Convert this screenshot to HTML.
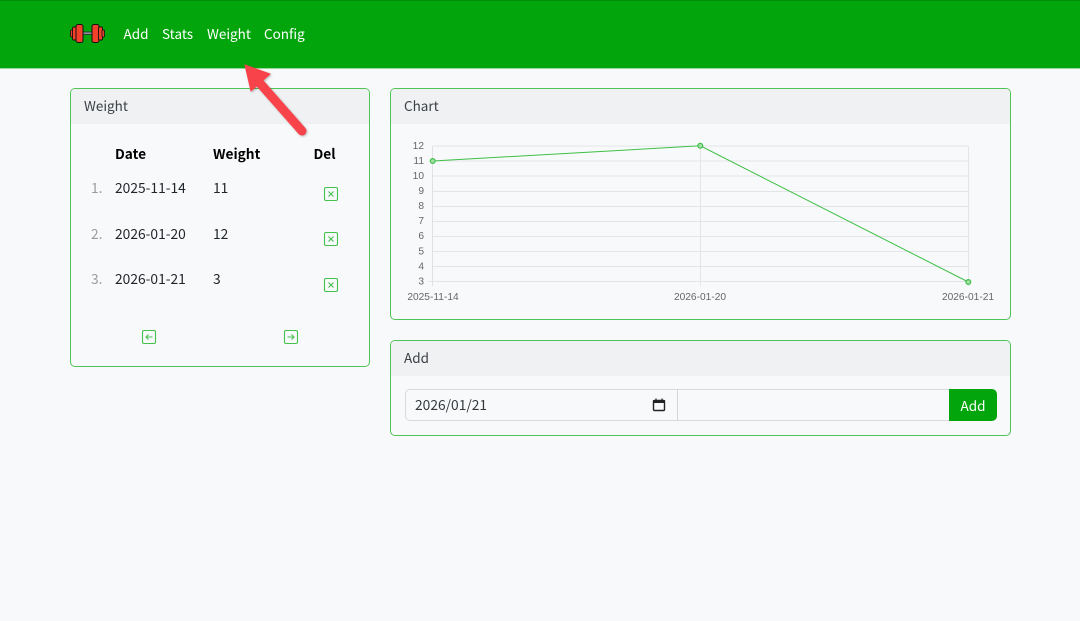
<!DOCTYPE html>
<html><head><meta charset="utf-8"><style>
*{box-sizing:border-box}
html,body{margin:0;padding:0;width:1080px;height:621px;overflow:hidden;background:#f8f9fa;font-family:"Noto Sans CJK JP","Liberation Sans",sans-serif;font-size:13.500px;color:#212529}
.a{position:absolute;white-space:nowrap;line-height:20px}
.nav{position:absolute;left:0;top:0;width:1080px;height:69px;background:#03a50c;border-top:1px solid #029009;border-bottom:1px solid #9ad79d}
.card{position:absolute;border:1px solid #4fc456;border-radius:5px;background:#f8f9fa;overflow:hidden}
.hd{height:35px;background:#f0f1f3;}
.n{color:#fff}
.b{font-weight:700;color:#000;font-size:13.700px}
.g{color:#9a9c9e;font-size:13.800px}
.d{font-size:13.800px}
</style></head><body>
<div class="nav"></div>
<svg class="a" style="left:70px;top:23px" width="35" height="22" viewBox="0 0 35 22">
<rect x="6" y="9" width="23" height="2.500" fill="#8a8f9c" stroke="#222" stroke-width=".7"/>
<rect x=".5" y="7" width="2.500" height="7" rx="1" fill="#e8402c" stroke="#111" stroke-width=".8"/>
<rect x="2.500" y="4" width="4" height="13" rx="1" fill="#f2412b" stroke="#111" stroke-width=".9"/>
<rect x="6" y="1.500" width="7" height="18" rx="2" fill="#f2412b" stroke="#111" stroke-width="1"/>
<rect x="22" y="1.500" width="7" height="18" rx="2" fill="#f2412b" stroke="#111" stroke-width="1"/>
<rect x="28.500" y="4" width="4" height="13" rx="1" fill="#f2412b" stroke="#111" stroke-width=".9"/>
<rect x="32" y="7" width="2.500" height="7" rx="1" fill="#e8402c" stroke="#111" stroke-width=".8"/>
</svg>
<div class="a n" style="left:123.500px;top:23px">Add</div>
<div class="a n" style="left:162px;top:23px">Stats</div>
<div class="a n" style="left:207px;top:23px">Weight</div>
<div class="a n" style="left:264px;top:23px">Config</div>

<div class="card" style="left:70px;top:88px;width:300px;height:279px"><div class="hd"></div></div>
<div class="card" style="left:390px;top:88px;width:621px;height:232px"><div class="hd"></div></div>
<div class="card" style="left:390px;top:340px;width:621px;height:96px"><div class="hd"></div></div>

<div class="a" style="left:84px;top:95px;color:#3b4046">Weight</div>
<div class="a" style="left:404px;top:95px;color:#3b4046">Chart</div>
<div class="a" style="left:404px;top:347px;color:#3b4046">Add</div>

<div class="a b" style="left:115px;top:143px">Date</div>
<div class="a b" style="left:213px;top:143px">Weight</div>
<div class="a b" style="left:313.500px;top:143px">Del</div>

<div class="a g" style="left:91px;top:177px">1.</div><div class="a d" style="left:115px;top:177px">2025-11-14</div><div class="a d" style="left:213px;top:177px">11</div>
<div class="a g" style="left:91px;top:223px">2.</div><div class="a d" style="left:115px;top:223px">2026-01-20</div><div class="a d" style="left:213px;top:223px">12</div>
<div class="a g" style="left:91px;top:268px">3.</div><div class="a d" style="left:115px;top:268px">2026-01-21</div><div class="a d" style="left:213px;top:268px">3</div>

<svg class="a" style="left:0;top:0" width="1080" height="621" viewBox="0 0 1080 621" fill="none">
<g stroke="#45c14d" stroke-width="1.100">
<rect x="324.500" y="187.500" width="13" height="13" rx="1.500"/>
<rect x="324.500" y="232.500" width="13" height="13" rx="1.500"/>
<rect x="324.500" y="278.500" width="13" height="13" rx="1.500"/>
<rect x="142.500" y="330.500" width="13" height="13" rx="1.500"/>
<rect x="284.500" y="330.500" width="13" height="13" rx="1.500"/>
<path d="M328.500 191.500l5 5m0-5l-5 5M328.500 236.500l5 5m0-5l-5 5M328.500 282.500l5 5m0-5l-5 5"/>
<path d="M152.500 337h-6.500m2.500-2.500L146 337l2.500 2.500M287.500 337h6.500m-2.500-2.500L294 337l-2.500 2.500"/>
</g>
<g stroke="#e3e5e8" stroke-width="1">
<path d="M432.500 146H968M432.500 161H968M432.500 176H968M432.500 191.500H968M432.500 206.500H968M432.500 221.500H968M432.500 236.500H968M432.500 251.500H968M432.500 266.500H968"/>
<path d="M428 281.500H968M700.500 146V286M968.500 146V286"/>
</g>
<path d="M432.500 146V286" stroke="#dfe1e4" stroke-width="1"/>
<g font-family="Liberation Sans, sans-serif" font-size="10.200" fill="#666" text-anchor="end">
<text x="424" y="149">12</text><text x="424" y="164">11</text><text x="424" y="179">10</text><text x="424" y="194">9</text><text x="424" y="209">8</text><text x="424" y="224">7</text><text x="424" y="239">6</text><text x="424" y="254.500">5</text><text x="424" y="269.500">4</text><text x="424" y="284.500">3</text>
</g>
<g font-family="Liberation Sans, sans-serif" font-size="10.200" fill="#666" text-anchor="middle">
<text x="433" y="300">2025-11-14</text><text x="700" y="300">2026-01-20</text><text x="968" y="300">2026-01-21</text>
</g>
<path d="M432.700 161 700.300 145.800 968.300 282" stroke="#3fbf47" stroke-width="1"/>
<g stroke="#3fbf47" stroke-width="1.200" fill="#a8dfa9">
<circle cx="432.700" cy="161" r="2.400"/><circle cx="700.300" cy="145.800" r="2.400"/><circle cx="968.300" cy="282" r="2.400"/>
</g>
<g style="filter:drop-shadow(1px 1px 1px rgba(0,0,0,.25))">
<path d="M302 131 258 81" stroke="#f9434b" stroke-width="9" stroke-linecap="round"/>
<path d="M245 65 270 74 251 91Z" fill="#f9434b" stroke="#f9434b" stroke-width="1" stroke-linejoin="round"/>
</g>
</svg>

<div class="a" style="left:404.500px;top:389px;width:545px;height:32px;border:1px solid #d8dadd;border-right:0;border-radius:5px 0 0 5px"></div>
<div class="a" style="left:677px;top:389px;width:1px;height:32px;background:#d4d6d9"></div>
<div class="a d" style="left:415px;top:394px;color:#33383d">2026/01/21</div>
<svg class="a" style="left:652px;top:398px" width="14" height="14" viewBox="0 0 14 14" fill="none"><rect x="1.500" y="2.500" width="11" height="10" rx="1" stroke="#222" stroke-width="1.400"/><rect x="1" y="2" width="12" height="3" fill="#222"/><path d="M4 .5v2M10 .5v2" stroke="#222" stroke-width="1.200"/></svg>
<div class="a" style="left:949px;top:389px;width:48px;height:32px;background:#03a50c;border-radius:0 5px 5px 0;color:#fff;text-align:center;line-height:32px">Add</div>
</body></html>
